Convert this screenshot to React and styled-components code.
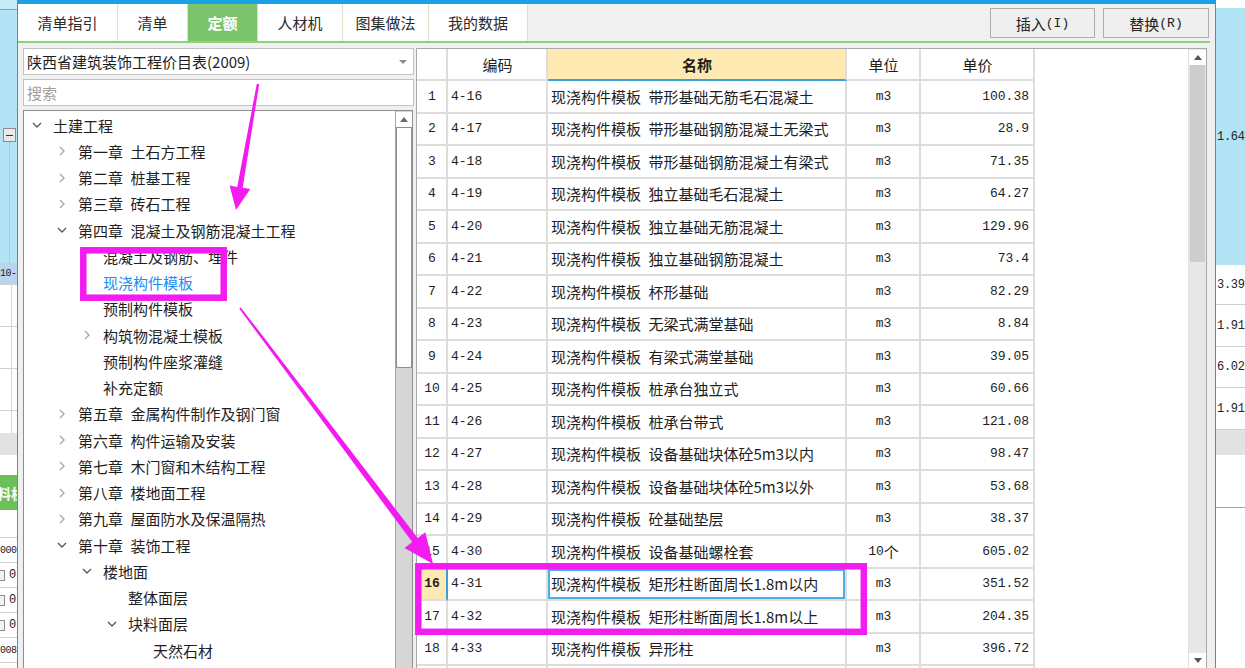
import React from "react";
import styled, { createGlobalStyle, css } from "styled-components";

const MONO = `"Liberation Mono", "Noto Sans CJK SC", monospace`;
const CJK = `"Noto Sans CJK SC", "Noto Sans", sans-serif`;

const GlobalStyle = createGlobalStyle`
  *, *::before, *::after { box-sizing: border-box; }
  html, body { margin: 0; padding: 0; width: 1245px; height: 668px; overflow: hidden; background: #fff; }
  body { font-family: ${CJK}; font-size: 15px; color: #1e1e1e; }
`;

const Screen = styled.div`
  position: relative;
  display: flex;
  width: 1245px;
  height: 668px;
  overflow: hidden;
  background: #fff;
`;

/* ---------- background application strips ---------- */
const BgStrip = styled.div`
  flex: none;
  width: ${(p) => p.$w}px;
  display: flex;
  flex-direction: column;
  overflow: hidden;
  background: #fff;
`;

const BgBand = styled.div`
  flex: none;
  height: ${(p) => p.$h}px;
  background-color: ${(p) => p.$bg || "#fff"};
  display: flex;
  align-items: center;
  justify-content: flex-start;
  padding-left: ${(p) => p.$pl || 0}px;
  font-family: ${MONO};
  font-size: 12px;
  color: #222;
  white-space: nowrap;
  overflow: hidden;
  ${(p) => p.$line && css`border-bottom: 1px solid #d0d0d0;`}
  ${(p) =>
    p.$grid &&
    css`background-image: linear-gradient(to right, transparent 11px, #d6d6d6 11px, #d6d6d6 12px, transparent 12px);`}
`;

const BgTreeArea = styled(BgBand)`
  flex-direction: column;
  align-items: flex-start;
`;

const MinusBox = styled.div`
  flex: none;
  margin: 118px 0 0 3px;
  width: 13px;
  height: 14px;
  border: 1px solid #8c8c8c;
  background: #e9e9e9;
  display: flex;
  align-items: center;
  justify-content: center;
  &::after {
    content: "";
    width: 7px;
    height: 1px;
    background: #333;
  }
`;

const BgStem = styled.div`
  flex: 1;
  width: 1px;
  margin-left: 9px;
  background: #a3cde0;
`;

const BgText = styled.span`
  margin-left: ${(p) => p.$ml || 0}px;
  font-family: ${(p) => (p.$cjk ? CJK : MONO)};
  font-weight: ${(p) => (p.$bold ? 700 : 400)};
  font-size: ${(p) => (p.$cjk ? 14 : p.$small ? 10 : 12)}px;
  letter-spacing: ${(p) => (p.$small ? -0.5 : p.$tight ? -0.3 : 0)}px;
  color: ${(p) => p.$color || "#222"};
`;

const MiniBox = styled.span`
  display: inline-block;
  width: 9px;
  height: 11px;
  margin-left: -4px;
  margin-right: 4px;
  border: 1px solid #8c8c8c;
  background: #f2f2f2;
`;

/* ---------- dialog ---------- */
const Dialog = styled.div`
  flex: none;
  width: 1199px;
  height: 668px;
  display: flex;
  flex-direction: column;
  background: #f0f0f0;
  border-top: 4px solid #1aa0e4;
  border-left: 1px solid #808080;
  border-right: 1px solid #808080;
  padding-right: 5px;
`;

const TabRow = styled.div`
  flex: none;
  height: 39px;
  display: flex;
  border-bottom: 2px solid #90cf80;
`;

const Tab = styled.div`
  flex: none;
  width: ${(p) => p.$w}px;
  display: flex;
  align-items: center;
  justify-content: center;
  border-right: 1px solid #d3e6cb;
  background: ${(p) => (p.$active ? "#7cc46b" : "#fff")};
  color: ${(p) => (p.$active ? "#fff" : "#2b2b2b")};
  font-weight: ${(p) => (p.$active ? 700 : 400)};
  font-size: 15px;
`;

const Spacer = styled.div`
  flex: 1;
`;

const ButtonGroup = styled.div`
  flex: none;
  display: flex;
  gap: 8px;
  margin: 4px 1px 0 0;
  align-self: flex-start;
`;

const ActionButton = styled.div`
  width: ${(p) => p.$w}px;
  height: 30px;
  display: flex;
  align-items: center;
  justify-content: center;
  background: #efefef;
  border: 1px solid #adadad;
  font-size: 15px;
  color: #222;
`;

const Hotkey = styled.span`
  font-family: ${MONO};
  font-size: 13px;
`;

const Body = styled.div`
  flex: 1;
  min-height: 0;
  display: flex;
  gap: 2px;
  padding-top: 5px;
`;

const LeftPane = styled.div`
  flex: none;
  width: 396px;
  padding-left: 5px;
  display: flex;
  flex-direction: column;
  gap: 4px;
`;

const Field = styled.div`
  flex: none;
  height: 27px;
  display: flex;
  align-items: center;
  padding: 0 6px 0 3px;
  background: #fff;
  border: 1px solid #c2c2c2;
  font-size: 15px;
  color: ${(p) => (p.$placeholder ? "#a0a0a0" : "#1e1e1e")};
  white-space: nowrap;
`;

const FieldText = styled.span`
  flex: 1;
`;

const Caret = styled.span`
  width: 0;
  height: 0;
  border-left: 4px solid transparent;
  border-right: 4px solid transparent;
  border-top: 4px solid #8a8a8a;
`;

const TreeBox = styled.div`
  flex: 1;
  min-height: 0;
  display: flex;
  margin-right: 1px;
  background: #fff;
  border: 1px solid #8e8e8e;
  border-bottom: none;
`;

const TreeList = styled.div`
  flex: 1;
  padding-top: 1px;
  overflow: hidden;
`;

const TreeRow = styled.div`
  height: 26.25px;
  display: flex;
  align-items: center;
  white-space: nowrap;
  padding-left: ${(p) => 8 + p.$level * 25}px;
  color: ${(p) => (p.$selected ? "#1b8cf0" : "#1e1e1e")};
  font-size: 15px;
`;

const ChevronBox = styled.span`
  flex: none;
  width: 10px;
  height: 10px;
  margin-right: 11px;
  display: flex;
`;

const VScroll = styled.div`
  flex: none;
  width: ${(p) => p.$w}px;
  display: flex;
  flex-direction: column;
  align-items: center;
  background: ${(p) => p.$track};
  border-left: 1px solid ${(p) => p.$edge};
`;

const ScrollArrow = styled.div`
  flex: none;
  width: 100%;
  height: 15px;
  display: flex;
  align-items: center;
  justify-content: center;
  background: #fff;
  margin-top: ${(p) => p.$mt || 0}px;
`;

const Tri = styled.span`
  width: 0;
  height: 0;
  border-left: 4px solid transparent;
  border-right: 4px solid transparent;
  ${(p) =>
    p.$down
      ? css`border-top: 5px solid ${p.$c};`
      : css`border-bottom: 5px solid ${p.$c};`}
`;

const Thumb = styled.div`
  flex: none;
  width: ${(p) => p.$w}px;
  height: ${(p) => p.$h}px;
  background: ${(p) => p.$bg};
  border: ${(p) => (p.$border ? `1px solid ${p.$border}` : "none")};
`;

const ScrollFill = styled.div`
  flex: 1;
`;

/* ---------- table ---------- */
const TablePane = styled.div`
  flex: none;
  width: 791px;
  display: flex;
  background: #fff;
  border: 1px solid #a9a9a9;
  border-bottom: none;
  overflow: hidden;
`;

const Grid = styled.div`
  flex: 1;
  display: flex;
  flex-direction: column;
  overflow: hidden;
`;

const GridRow = styled.div`
  flex: none;
  display: grid;
  grid-template-columns: 31px 100px 299px 74px 114px;
  height: ${(p) => (p.$header ? 32 : 32.5)}px;
`;

const justify = { left: "flex-start", center: "center", right: "flex-end" };

const Cell = styled.div`
  display: flex;
  align-items: center;
  justify-content: ${(p) => justify[p.$align || "left"]};
  padding: 0 ${(p) => (p.$align === "right" ? 4 : 2)}px 0 3px;
  border-right: 2px solid #dddddd;
  border-bottom: 2px solid #dddddd;
  font-family: ${(p) => (p.$mono ? MONO : CJK)};
  font-size: ${(p) => (p.$mono ? 13 : 15)}px;
  color: #1e1e1e;
  white-space: nowrap;
  overflow: hidden;
  ${(p) =>
    p.$title &&
    css`
      background: #fde9b1;
      font-weight: 700;
      border-bottom-color: #3aa0dc;
    `}
  ${(p) =>
    p.$current &&
    css`
      background: #fde9b1;
      font-weight: 700;
      border-right-color: #3aa0dc;
    `}
  ${(p) =>
    p.$focus &&
    css`
      box-shadow: inset 0 0 0 2px #4aaee0;
    `}
`;

const UnitHan = styled.span`
  font-family: ${CJK};
  font-size: 15px;
`;

/* ---------- annotation overlay ---------- */
const Overlay = styled.svg`
  position: absolute;
  left: 0;
  top: 0;
  pointer-events: none;
`;

function arrowPolygon(x1, y1, x2, y2, w0, w1, headLen, headHalf) {
  const dx = x2 - x1;
  const dy = y2 - y1;
  const len = Math.hypot(dx, dy);
  const ux = dx / len;
  const uy = dy / len;
  const px = -uy;
  const py = ux;
  const bx = x2 - ux * headLen;
  const by = y2 - uy * headLen;
  const pts = [
    [x1 + px * w0, y1 + py * w0],
    [bx + px * w1, by + py * w1],
    [bx + px * headHalf, by + py * headHalf],
    [x2, y2],
    [bx - px * headHalf, by - py * headHalf],
    [bx - px * w1, by - py * w1],
    [x1 - px * w0, y1 - py * w0],
  ];
  return pts.map(([x, y]) => `${x.toFixed(1)},${y.toFixed(1)}`).join(" ");
}

/* ---------- data ---------- */
const SP = "\u2002";
const P = "现浇构件模板" + SP;

const rows = [
  ["4-16", P + "带形基础无筋毛石混凝土", "m3", "100.38"],
  ["4-17", P + "带形基础钢筋混凝土无梁式", "m3", "28.9"],
  ["4-18", P + "带形基础钢筋混凝土有梁式", "m3", "71.35"],
  ["4-19", P + "独立基础毛石混凝土", "m3", "64.27"],
  ["4-20", P + "独立基础无筋混凝土", "m3", "129.96"],
  ["4-21", P + "独立基础钢筋混凝土", "m3", "73.4"],
  ["4-22", P + "杯形基础", "m3", "82.29"],
  ["4-23", P + "无梁式满堂基础", "m3", "8.84"],
  ["4-24", P + "有梁式满堂基础", "m3", "39.05"],
  ["4-25", P + "桩承台独立式", "m3", "60.66"],
  ["4-26", P + "桩承台带式", "m3", "121.08"],
  ["4-27", P + "设备基础块体砼5m3以内", "m3", "98.47"],
  ["4-28", P + "设备基础块体砼5m3以外", "m3", "53.68"],
  ["4-29", P + "砼基础垫层", "m3", "38.37"],
  ["4-30", P + "设备基础螺栓套", "10个", "605.02"],
  ["4-31", P + "矩形柱断面周长1.8m以内", "m3", "351.52"],
  ["4-32", P + "矩形柱断面周长1.8m以上", "m3", "204.35"],
  ["4-33", P + "异形柱", "m3", "396.72"],
  ["", "", "", ""],
];

const tree = [
  [0, "open", "土建工程"],
  [1, "closed", "第一章" + SP + "土石方工程"],
  [1, "closed", "第二章" + SP + "桩基工程"],
  [1, "closed", "第三章" + SP + "砖石工程"],
  [1, "open", "第四章" + SP + "混凝土及钢筋混凝土工程"],
  [2, "leaf", "混凝土及钢筋、埋件"],
  [2, "leaf", "现浇构件模板", true],
  [2, "leaf", "预制构件模板"],
  [2, "closed", "构筑物混凝土模板"],
  [2, "leaf", "预制构件座浆灌缝"],
  [2, "leaf", "补充定额"],
  [1, "closed", "第五章" + SP + "金属构件制作及钢门窗"],
  [1, "closed", "第六章" + SP + "构件运输及安装"],
  [1, "closed", "第七章" + SP + "木门窗和木结构工程"],
  [1, "closed", "第八章" + SP + "楼地面工程"],
  [1, "closed", "第九章" + SP + "屋面防水及保温隔热"],
  [1, "open", "第十章" + SP + "装饰工程"],
  [2, "open", "楼地面"],
  [3, "leaf", "整体面层"],
  [3, "open", "块料面层"],
  [4, "leaf", "天然石材"],
];

const tabs = [
  ["清单指引", 100],
  ["清单", 70],
  ["定额", 70, true],
  ["人材机", 85],
  ["图集做法", 86],
  ["我的数据", 99],
];

function Chevron({ kind }) {
  if (kind === "leaf") return <ChevronBox />;
  return (
    <ChevronBox>
      <svg width="10" height="10" viewBox="0 0 10 10">
        {kind === "open" ? (
          <polyline points="1,3 5,7 9,3" fill="none" stroke="#5a5a5a" strokeWidth="1.4" />
        ) : (
          <polyline points="3,1 7,5 3,9" fill="none" stroke="#a8a8a8" strokeWidth="1.4" />
        )}
      </svg>
    </ChevronBox>
  );
}

function Unit({ value }) {
  const m = value.match(/^(\d*)([^\d].*)?$/);
  if (m && m[2] && /[\u4e00-\u9fff]/.test(m[2])) {
    return (
      <>
        {m[1]}
        <UnitHan>{m[2]}</UnitHan>
      </>
    );
  }
  return value;
}

export default function App() {
  const MAG = "#f21cf0";
  return (
    <Screen>
      <GlobalStyle />

      <BgStrip $w={17}>
        <BgBand $h={9} $bg="#c6eaf8" />
        <BgBand $h={1} $bg="#58ade0" />
        <BgTreeArea $h={253} $bg="#b3e4f6">
          <MinusBox />
          <BgStem />
        </BgTreeArea>
        <BgBand $h={22} $bg="#b9d3f0" $line>
          <BgText $small>10-</BgText>
        </BgBand>
        <BgBand $h={42} $line $grid />
        <BgBand $h={42} $line $grid />
        <BgBand $h={42} $line $grid />
        <BgBand $h={22} $grid />
        <BgBand $h={22} $bg="#e2e2e2" />
        <BgBand $h={20} />
        <BgBand $h={35} $bg="#6cc05a">
          <BgText $cjk $bold $color="#fff" $ml={-3}>料机</BgText>
        </BgBand>
        <BgBand $h={28} $line />
        <BgBand $h={25} $line>
          <BgText $small>000</BgText>
        </BgBand>
        <BgBand $h={25} $line>
          <MiniBox />
          <BgText>0</BgText>
        </BgBand>
        <BgBand $h={25} $line>
          <MiniBox />
          <BgText>0</BgText>
        </BgBand>
        <BgBand $h={25} $line>
          <MiniBox />
          <BgText>0</BgText>
        </BgBand>
        <BgBand $h={25} $line>
          <BgText $small>008</BgText>
        </BgBand>
        <BgBand $h={10} />
      </BgStrip>

      <Dialog>
        <TabRow>
          {tabs.map(([label, w, active]) => (
            <Tab key={label} $w={w} $active={active}>
              {label}
            </Tab>
          ))}
          <Spacer />
          <ButtonGroup>
            <ActionButton $w={105}>
              插入<Hotkey>(I)</Hotkey>
            </ActionButton>
            <ActionButton $w={106}>
              替换<Hotkey>(R)</Hotkey>
            </ActionButton>
          </ButtonGroup>
        </TabRow>

        <Body>
          <LeftPane>
            <Field>
              <FieldText>陕西省建筑装饰工程价目表(2009)</FieldText>
              <Caret />
            </Field>
            <Field $placeholder>搜索</Field>
            <TreeBox>
              <TreeList>
                {tree.map(([level, kind, text, sel], i) => (
                  <TreeRow key={i} $level={level} $selected={sel}>
                    <Chevron kind={kind} />
                    {text}
                  </TreeRow>
                ))}
              </TreeList>
              <VScroll $w={17} $track="#d6d6d6" $edge="#a5a5a5">
                <ScrollArrow $mt={1}>
                  <Tri $c="#6a6a6a" />
                </ScrollArrow>
                <Thumb $w={16} $h={241} $bg="#fff" $border="#8f8f8f" />
                <ScrollFill />
              </VScroll>
            </TreeBox>
          </LeftPane>

          <TablePane>
            <Grid>
              <GridRow $header>
                <Cell />
                <Cell $align="center">编码</Cell>
                <Cell $align="center" $title>
                  名称
                </Cell>
                <Cell $align="center">单位</Cell>
                <Cell $align="center">单价</Cell>
              </GridRow>
              {rows.map(([code, name, unit, price], i) => {
                const cur = i === 15;
                return (
                  <GridRow key={i}>
                    <Cell $align="center" $mono $current={cur}>
                      {code ? i + 1 : ""}
                    </Cell>
                    <Cell $mono>{code}</Cell>
                    <Cell $focus={cur}>{name}</Cell>
                    <Cell $align="center" $mono>
                      <Unit value={unit} />
                    </Cell>
                    <Cell $align="right" $mono>
                      {price}
                    </Cell>
                  </GridRow>
                );
              })}
            </Grid>
            <VScroll $w={18} $track="#e7e7e7" $edge="#e0e0e0">
              <ScrollArrow $mt={1}>
                <Tri $c="#555" />
              </ScrollArrow>
              <Thumb $w={15} $h={197} $bg="#cdcdcd" />
              <ScrollFill />
              <ScrollArrow>
                <Tri $down $c="#555" />
              </ScrollArrow>
            </VScroll>
          </TablePane>
        </Body>
      </Dialog>

      <BgStrip $w={29}>
        <BgBand $h={8} />
        <BgBand $h={257} $bg="#b3e4f6" $pl={1}>
          <BgText $tight>1.64</BgText>
        </BgBand>
        <BgBand $h={40} $line $pl={1}>
          <BgText $tight>3.39</BgText>
        </BgBand>
        <BgBand $h={42} $line $pl={1}>
          <BgText $tight>1.91</BgText>
        </BgBand>
        <BgBand $h={41} $line $pl={1}>
          <BgText $tight>6.02</BgText>
        </BgBand>
        <BgBand $h={42} $line $pl={1}>
          <BgText $tight>1.91</BgText>
        </BgBand>
        <BgBand $h={25} $bg="#e2e2e2" />
        <BgBand $h={52} />
        <BgBand $h={1} $bg="#7cc46b" />
        <BgBand $h={160} />
      </BgStrip>

      <Overlay width="1245" height="668" viewBox="0 0 1245 668">
        <rect x="83.3" y="250.3" width="140.4" height="47.4" fill="none" stroke={MAG} strokeWidth="6.5" />
        <rect x="418.3" y="566.3" width="445.5" height="65.5" fill="none" stroke={MAG} strokeWidth="6.5" />
        <polygon points={arrowPolygon(258, 84, 236, 210, 1.2, 2.8, 23, 10.5)} fill={MAG} />
        <polygon points={arrowPolygon(240, 308, 433, 564, 1, 3.4, 30, 13)} fill={MAG} />
      </Overlay>
    </Screen>
  );
}
